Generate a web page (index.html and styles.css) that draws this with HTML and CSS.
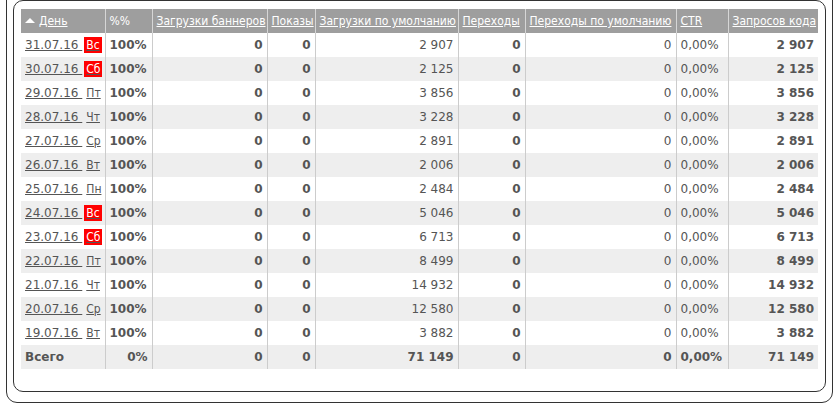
FILE: index.html
```html
<!DOCTYPE html>
<html lang="ru">
<head>
<meta charset="utf-8">
<link rel="stylesheet" href="styles.css">
</head>
<body>
<div class="outer">
  <div class="inner">
    <table class="stats">
      <thead>
        <tr>
          <th class="c-day"><span class="arrow"></span><a href="#">День</a></th>
          <th class="c-pct">%%</th>
          <th class="c-bl"><a href="#">Загрузки баннеров</a></th>
          <th class="c-sh"><a href="#">Показы</a></th>
          <th class="c-dl"><a href="#">Загрузки по умолчанию</a></th>
          <th class="c-cl"><a href="#">Переходы</a></th>
          <th class="c-dc"><a href="#">Переходы по умолчанию</a></th>
          <th class="c-ctr"><a href="#">CTR</a></th>
          <th class="c-req"><a href="#">Запросов кода</a></th>
        </tr>
      </thead>
      <tbody>
        <tr><td><a href="#">31.07.16 <span class="we">Вс</span></a></td><td class="b">100%</td><td class="r b">0</td><td class="r b">0</td><td class="r">2 907</td><td class="r b">0</td><td class="r">0</td><td>0,00%</td><td class="r b">2 907</td></tr>
        <tr><td><a href="#">30.07.16 <span class="we">Сб</span></a></td><td class="b">100%</td><td class="r b">0</td><td class="r b">0</td><td class="r">2 125</td><td class="r b">0</td><td class="r">0</td><td>0,00%</td><td class="r b">2 125</td></tr>
        <tr><td><a href="#">29.07.16 <span class="wd">Пт</span></a></td><td class="b">100%</td><td class="r b">0</td><td class="r b">0</td><td class="r">3 856</td><td class="r b">0</td><td class="r">0</td><td>0,00%</td><td class="r b">3 856</td></tr>
        <tr><td><a href="#">28.07.16 <span class="wd">Чт</span></a></td><td class="b">100%</td><td class="r b">0</td><td class="r b">0</td><td class="r">3 228</td><td class="r b">0</td><td class="r">0</td><td>0,00%</td><td class="r b">3 228</td></tr>
        <tr><td><a href="#">27.07.16 <span class="wd">Ср</span></a></td><td class="b">100%</td><td class="r b">0</td><td class="r b">0</td><td class="r">2 891</td><td class="r b">0</td><td class="r">0</td><td>0,00%</td><td class="r b">2 891</td></tr>
        <tr><td><a href="#">26.07.16 <span class="wd">Вт</span></a></td><td class="b">100%</td><td class="r b">0</td><td class="r b">0</td><td class="r">2 006</td><td class="r b">0</td><td class="r">0</td><td>0,00%</td><td class="r b">2 006</td></tr>
        <tr><td><a href="#">25.07.16 <span class="wd">Пн</span></a></td><td class="b">100%</td><td class="r b">0</td><td class="r b">0</td><td class="r">2 484</td><td class="r b">0</td><td class="r">0</td><td>0,00%</td><td class="r b">2 484</td></tr>
        <tr><td><a href="#">24.07.16 <span class="we">Вс</span></a></td><td class="b">100%</td><td class="r b">0</td><td class="r b">0</td><td class="r">5 046</td><td class="r b">0</td><td class="r">0</td><td>0,00%</td><td class="r b">5 046</td></tr>
        <tr><td><a href="#">23.07.16 <span class="we">Сб</span></a></td><td class="b">100%</td><td class="r b">0</td><td class="r b">0</td><td class="r">6 713</td><td class="r b">0</td><td class="r">0</td><td>0,00%</td><td class="r b">6 713</td></tr>
        <tr><td><a href="#">22.07.16 <span class="wd">Пт</span></a></td><td class="b">100%</td><td class="r b">0</td><td class="r b">0</td><td class="r">8 499</td><td class="r b">0</td><td class="r">0</td><td>0,00%</td><td class="r b">8 499</td></tr>
        <tr><td><a href="#">21.07.16 <span class="wd">Чт</span></a></td><td class="b">100%</td><td class="r b">0</td><td class="r b">0</td><td class="r">14 932</td><td class="r b">0</td><td class="r">0</td><td>0,00%</td><td class="r b">14 932</td></tr>
        <tr><td><a href="#">20.07.16 <span class="wd">Ср</span></a></td><td class="b">100%</td><td class="r b">0</td><td class="r b">0</td><td class="r">12 580</td><td class="r b">0</td><td class="r">0</td><td>0,00%</td><td class="r b">12 580</td></tr>
        <tr><td><a href="#">19.07.16 <span class="wd">Вт</span></a></td><td class="b">100%</td><td class="r b">0</td><td class="r b">0</td><td class="r">3 882</td><td class="r b">0</td><td class="r">0</td><td>0,00%</td><td class="r b">3 882</td></tr>
      </tbody>
      <tfoot>
        <tr><td class="b">Всего</td><td class="r b">0%</td><td class="r b">0</td><td class="r b">0</td><td class="r b">71 149</td><td class="r b">0</td><td class="r b">0</td><td class="b">0,00%</td><td class="r b">71 149</td></tr>
      </tfoot>
    </table>
  </div>
</div>
</body>
</html>
```
FILE: styles.css
```css
html, body {
  margin: 0;
  padding: 0;
  background: #fff;
}
body {
  font-family: "DejaVu Sans", Verdana, sans-serif;
  font-size: 12px;
  color: #555;
  overflow: hidden;
}
.outer {
  margin: -30px 0 0 6px;
  width: 827px;
  border: 1px solid #333;
  border-radius: 11px;
  padding: 29px 6px 10px 6px;
  box-sizing: border-box;
}
.inner {
  border: 1px solid #333;
  border-radius: 10px;
  padding: 8px 6px 22px 7px;
}
.stats {
  width: 797px;
  border-collapse: collapse;
  table-layout: fixed;
}
.stats th,
.stats td {
  height: 24px;
  padding: 0 4px;
  white-space: nowrap;
  box-sizing: border-box;
  border-left: 1px solid #ccc;
}
.stats th:first-child,
.stats td:first-child {
  border-left: none;
}
.stats th {
  font-family: "DejaVu Sans Condensed", "DejaVu Sans", sans-serif;
  background: #9e9e9e;
  color: #fff;
  font-weight: normal;
  text-align: left;
  border-left-color: #d6d6d6;
}
.stats th a {
  color: #fff;
}
.stats td a {
  color: #555;
}
.stats tbody tr:nth-child(even) td,
.stats tfoot td {
  background: #eee;
}
.c-day { width: 84px; }
.c-pct { width: 47px; }
.c-bl { width: 115px; }
.c-sh { width: 48px; }
.c-dl { width: 143px; }
.c-cl { width: 67px; }
.c-dc { width: 151px; }
.c-ctr { width: 52px; }
.c-req { width: 90px; }
.arrow {
  display: inline-block;
  width: 0;
  height: 0;
  border-left: 5px solid transparent;
  border-right: 5px solid transparent;
  border-bottom: 5px solid #fff;
  margin-right: 4px;
  vertical-align: 2px;
}
.we,
.wd {
  font-family: "DejaVu Sans Condensed", "DejaVu Sans", sans-serif;
  padding: 1px 2px;
  margin-left: 2px;
}
.we {
  background: #f00;
  color: #fff;
}
.b { font-weight: bold; }
.r { text-align: right; }
```
